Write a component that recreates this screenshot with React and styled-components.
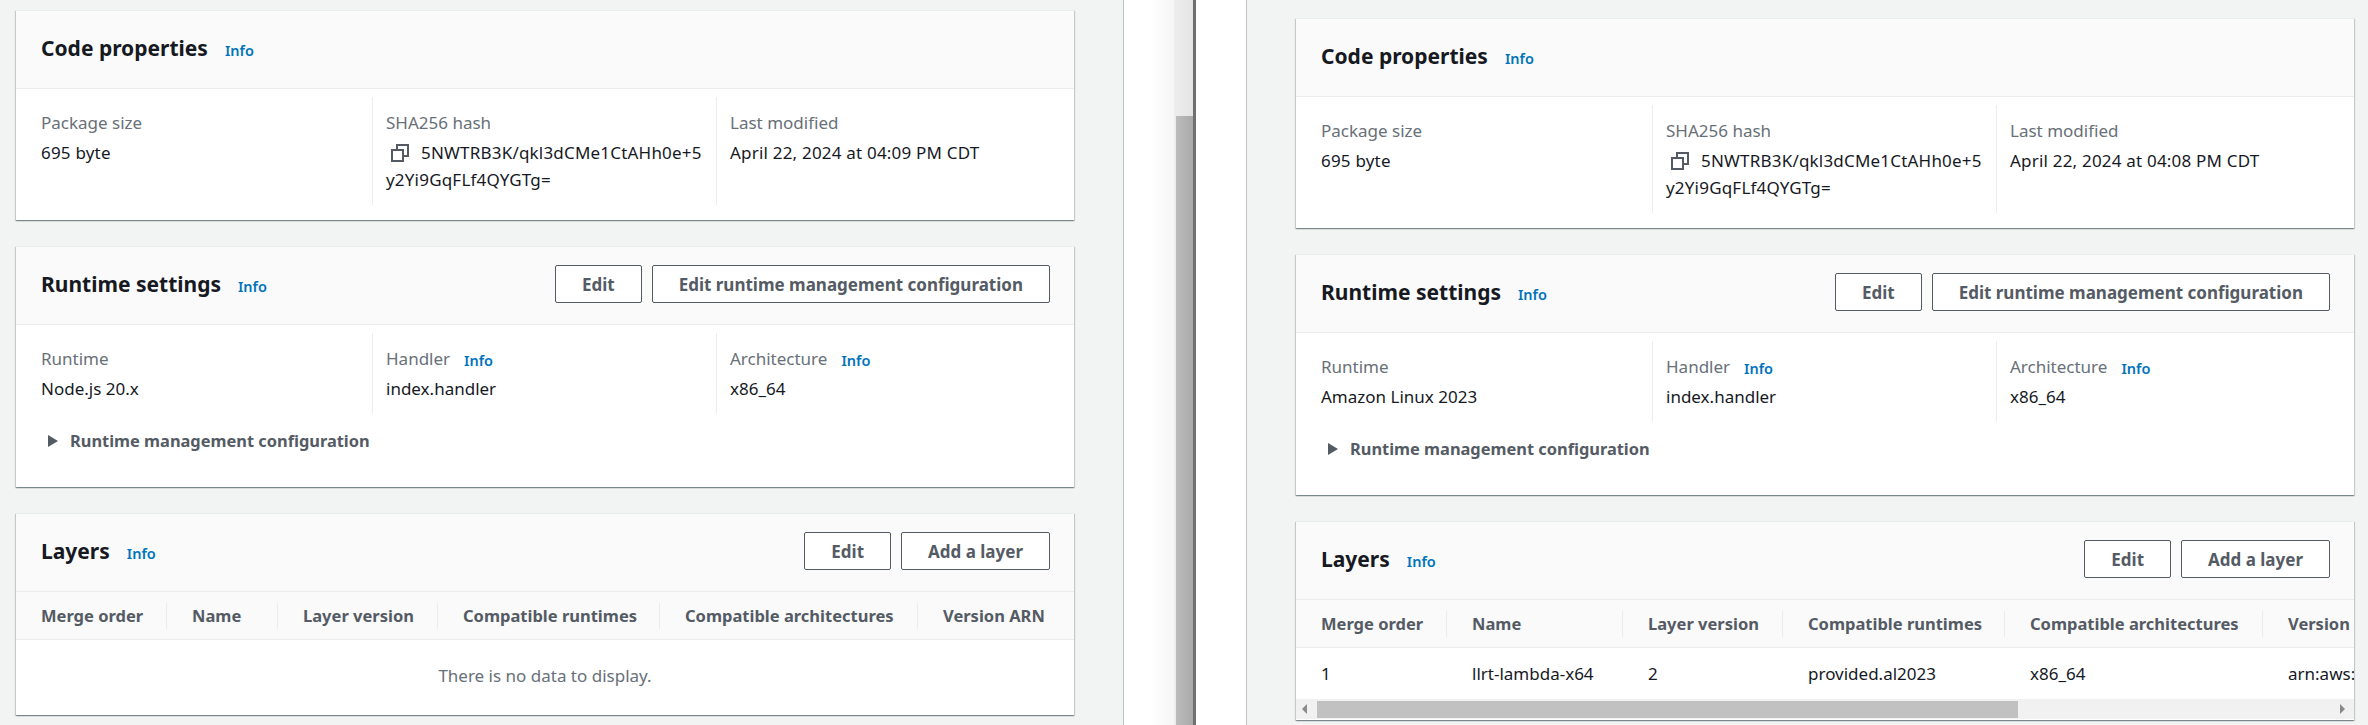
import React from 'react'
import styled, { createGlobalStyle } from 'styled-components'

const Global = createGlobalStyle`
  html, body { margin: 0; padding: 0; background: #fff; }
  body { font-family: "Noto Sans", "Open Sans", sans-serif; color: #16191f; }
`

const Screen = styled.div`
  display: flex;
  width: 2368px;
  height: 725px;
  overflow: hidden;
`

const Pane = styled.div`
  flex: none;
  box-sizing: border-box;
  width: ${p => p.$width}px;
  padding: ${p => p.$top}px ${p => p.$right}px 0 ${p => p.$left}px;
  background: #f2f3f3;
  display: flex;
  flex-direction: column;
  gap: 26px;
  border-color: #bcc4c8;
  border-style: solid;
  border-width: ${p => (p.$side === 'left' ? '0 1px 0 0' : '0 0 0 1px')};
`

const Gutter = styled.div`
  flex: none;
  width: 50px;
  background: ${p => (p.$fade ? 'linear-gradient(to right, #fff 50%, #f6f6f6)' : '#fff')};
`

const Scrollbar = styled.div`
  flex: none;
  width: 19px;
  box-sizing: border-box;
  padding: 116px 0 0 2px;
  background: linear-gradient(to right, #ededed, #e4e4e4);
`

const Thumb = styled.div`
  height: 100%;
  background: linear-gradient(to right, #bcbcbc, #a9a9a9);
`

const Divider = styled.div`
  flex: none;
  width: 3px;
  background: #6f6f6f;
`

const Card = styled.section`
  flex: none;
  background: #fff;
  height: ${p => p.$height}px;
  box-shadow: 0 1px 1px 0 rgba(0, 28, 36, 0.3), 1px 1px 1px 0 rgba(0, 28, 36, 0.15), -1px 1px 1px 0 rgba(0, 28, 36, 0.15);
  border-top: 1px solid #eaeded;
  box-sizing: border-box;
  overflow: hidden;
`

const CardHead = styled.header`
  display: flex;
  align-items: center;
  height: 78px;
  box-sizing: border-box;
  padding: 0 24px 3px 25px;
  background: #fafafa;
  border-bottom: 1px solid #eaeded;
`

const Title = styled.h2`
  margin: 0;
  font-size: 21px;
  font-weight: 700;
  color: #16191f;
`

const Info = styled.a`
  margin: 3px 0 0 17px;
  font-size: 14.5px;
  line-height: 20px;
  font-weight: 600;
  color: #0073bb;
`

const LabelInfo = styled(Info)`
  margin: 1px 0 0 14px;
`

const Actions = styled.div`
  margin-left: auto;
  display: flex;
  gap: 10px;
`

const Button = styled.button`
  height: 38px;
  padding: 0 26px;
  background: #fff;
  border: 1px solid #545b64;
  border-radius: 2px;
  font: 700 17px "Noto Sans", sans-serif;
  color: #545b64;
`

const Columns = styled.div`
  display: grid;
  grid-template-columns: 356px 344px 1fr;
  padding-top: 8px;
`

const Column = styled.div`
  box-sizing: border-box;
  padding: ${p => (p.$first ? '0 14px 12px 25px' : '0 10px 12px 13px')};
  border-left: ${p => (p.$first ? 'none' : '1px solid #eaeded')};
  font-size: 17px;
  line-height: 27px;
`

const Label = styled.div`
  display: flex;
  align-items: center;
  color: #687078;
  padding-top: 10px;
  line-height: 32px;
`

const Value = styled.div`
  color: #16191f;
`

const Numeric = styled(Value)`
  letter-spacing: 0.2px;
`

const Hash = styled(Numeric)`
  word-break: break-all;
`

const CopyIcon = styled.svg`
  width: 18px;
  height: 18px;
  vertical-align: -3px;
  margin: 0 12px 0 5px;
`

const Expander = styled.div`
  display: flex;
  align-items: center;
  gap: 12px;
  padding: 14px 0 0 32px;
  font-size: 16.4px;
  line-height: 26px;
  font-weight: 700;
  color: #545b64;
`

const Caret = styled.svg`
  width: 10px;
  height: 12px;
  fill: #545b64;
`

const TableWrap = styled.div`
  overflow: hidden;
`

const Table = styled.div`
  display: grid;
  grid-template-columns: ${p => p.$cols};
  width: ${p => p.$width}px;
`

const Head = styled.div`
  height: 48px;
  box-sizing: border-box;
  display: flex;
  align-items: center;
  background: #fafafa;
  border-bottom: 1px solid #eaeded;
  font-size: 16.5px;
  font-weight: 700;
  color: #545b64;
  padding-left: ${p => (p.$first ? 25 : 0)}px;
  white-space: nowrap;
`

const HeadText = styled.span`
  flex: 1;
  display: flex;
  align-items: center;
  height: 26px;
  padding-left: ${p => (p.$first ? 0 : 25)}px;
  border-left: ${p => (p.$first ? 'none' : '1px solid #eaeded')};
`

const Cell = styled.div`
  height: 51px;
  display: flex;
  align-items: center;
  font-size: 17px;
  white-space: nowrap;
  padding-left: ${p => (p.$first ? 25 : 26)}px;
`

const Empty = styled.div`
  text-align: center;
  padding-top: 24px;
  font-size: 17px;
  color: #687078;
`

const HScroll = styled.div`
  height: 20px;
  display: flex;
  align-items: center;
  background: #f1f1f1;
`

const ScrollArrow = styled.svg`
  flex: none;
  width: ${p => p.$w}px;
  height: 12px;
  fill: #8a8a8a;
`

const ScrollThumb = styled.div`
  height: 17px;
  width: 701px;
  background: #c1c1c1;
`

const Copy = () => (
  <CopyIcon viewBox="0 0 18 18" fill="none" stroke="#545b64" strokeWidth="2">
    <path d="M6 5V1h11v11h-4" />
    <rect x="1" y="6" width="11" height="11" />
  </CopyIcon>
)

const SectionHead = ({ title, actions }) => (
  <CardHead>
    <Title>{title}</Title>
    <Info>Info</Info>
    {actions && (
      <Actions>
        {actions.map(a => <Button key={a}>{a}</Button>)}
      </Actions>
    )}
  </CardHead>
)

const CodeCard = ({ modified }) => (
  <Card $height={210}>
    <SectionHead title="Code properties" />
    <Columns>
      <Column $first>
        <Label>Package size</Label>
        <Numeric>695 byte</Numeric>
      </Column>
      <Column>
        <Label>SHA256 hash</Label>
        <Hash><Copy />5NWTRB3K/qkl3dCMe1CtAHh0e+5y2Yi9GqFLf4QYGTg=</Hash>
      </Column>
      <Column>
        <Label>Last modified</Label>
        <Numeric>{modified}</Numeric>
      </Column>
    </Columns>
  </Card>
)

const RuntimeCard = ({ runtime }) => (
  <Card $height={241}>
    <SectionHead title="Runtime settings" actions={['Edit', 'Edit runtime management configuration']} />
    <Columns>
      <Column $first>
        <Label>Runtime</Label>
        <Value>{runtime}</Value>
      </Column>
      <Column>
        <Label>Handler<LabelInfo>Info</LabelInfo></Label>
        <Value>index.handler</Value>
      </Column>
      <Column>
        <Label>Architecture<LabelInfo>Info</LabelInfo></Label>
        <Value>x86_64</Value>
      </Column>
    </Columns>
    <Expander>
      <Caret viewBox="0 0 10 12"><path d="M0 0l10 6-10 6z" /></Caret>
      Runtime management configuration
    </Expander>
  </Card>
)

const headers = ['Merge order', 'Name', 'Layer version', 'Compatible runtimes', 'Compatible architectures']

const LayersCard = ({ height, cols, width, rows }) => (
  <Card $height={height}>
    <SectionHead title="Layers" actions={['Edit', 'Add a layer']} />
    <TableWrap>
      <Table $cols={cols} $width={width}>
        {[...headers, 'Version ARN'].map((h, i) => (
          <Head key={h} $first={i === 0}>
            <HeadText $first={i === 0}>{h}</HeadText>
          </Head>
        ))}
        {rows && rows.map((c, i) => <Cell key={c} $first={i === 0}>{c}</Cell>)}
      </Table>
    </TableWrap>
    {!rows && <Empty>There is no data to display.</Empty>}
    {rows && (
      <HScroll>
        <ScrollArrow $w={21} viewBox="0 0 21 12"><path d="M11 1v10l-5-5z" /></ScrollArrow>
        <ScrollThumb />
        <ScrollArrow $w={336} viewBox="0 0 336 12"><path d="M322 1v10l5-5z" /></ScrollArrow>
      </HScroll>
    )}
  </Card>
)

export default function App() {
  return (
    <Screen>
      <Global />
      <Pane $width={1124} $top={10} $left={16} $right={49} $side="left">
        <CodeCard modified="April 22, 2024 at 04:09 PM CDT" />
        <RuntimeCard runtime="Node.js 20.x" />
        <LayersCard
          height={202}
          width={1058}
          cols="150px 111px 160px 222px 258px 157px"
        />
      </Pane>
      <Gutter $fade />
      <Scrollbar><Thumb /></Scrollbar>
      <Divider />
      <Gutter />
      <Pane $width={1122} $top={18} $left={49} $right={14} $side="right">
        <CodeCard modified="April 22, 2024 at 04:08 PM CDT" />
        <RuntimeCard runtime="Amazon Linux 2023" />
        <LayersCard
          height={199}
          width={1300}
          cols="150px 176px 160px 222px 258px 334px"
          rows={['1', 'llrt-lambda-x64', '2', 'provided.al2023', 'x86_64', 'arn:aws:lambda:us-east-1']}
        />
      </Pane>
    </Screen>
  )
}
